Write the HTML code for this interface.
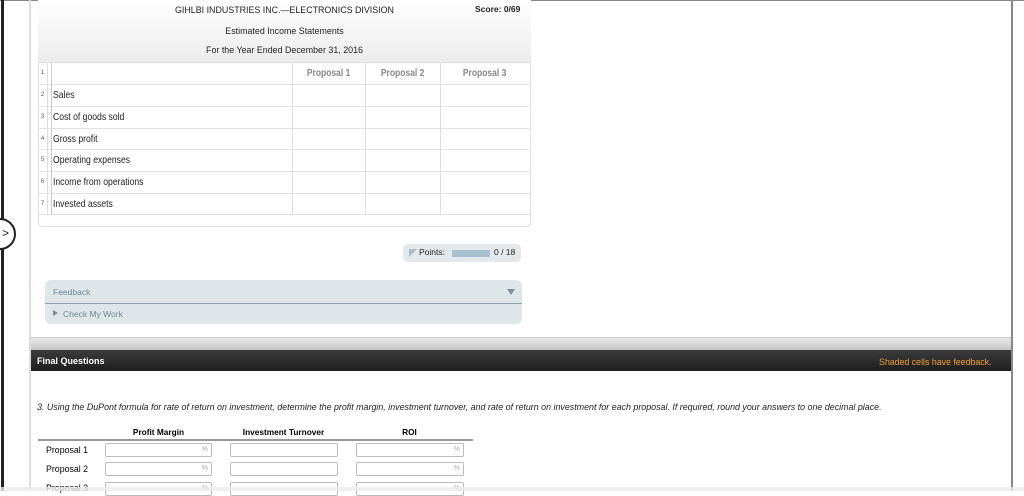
<!DOCTYPE html>
<html><head><style>
*{margin:0;padding:0;box-sizing:border-box}
body{width:1024px;height:491px;overflow:hidden;background:#fff;font-family:"Liberation Sans",sans-serif;position:relative}
.a{position:absolute}
.row{position:absolute;left:38px;width:492px;height:22px;border-top:1px solid #e2e2e2}
.row .n{position:absolute;left:0;width:10px;top:0;height:21px;border-right:1px solid #ddd;font-size:6px;color:#555;text-align:center;line-height:21px}
.row .l{position:absolute;left:15px;top:0;line-height:21px;font-size:10.5px;color:#222;font-family:"Liberation Sans Narrow","Liberation Sans",sans-serif;transform:scaleX(.82);transform-origin:left;white-space:nowrap}
.row .c{position:absolute;top:0;height:21px;border-left:1px solid #ddd}
.ph{position:absolute;text-align:center;line-height:21px;font-size:10px;color:#888;font-weight:bold;font-family:"Liberation Sans Narrow",sans-serif}
.ph span{display:inline-block;transform:scaleX(.85)}
.inp{position:absolute;height:14px;border:1px solid #bbb;border-radius:2px;background:#fff;font-size:7px;color:#aaa;text-align:right;padding-right:3px;line-height:12px}
</style></head><body>
<div class="a" style="left:0;top:0;width:1024px;height:1px;background:#888"></div>
<div class="a" style="left:1px;top:0;width:3px;height:491px;background:#222"></div>
<div class="a" style="left:-16px;top:218px;width:32px;height:32px;border:2px solid #222;border-radius:50%;background:#fff"></div>
<div class="a" style="left:2px;top:226px;font-size:12px;color:#222">&gt;</div>
<div class="a" style="left:29px;top:0;width:2px;height:491px;background:#ddd"></div>
<div class="a" style="left:1011px;top:0;width:2px;height:491px;background:#888"></div>
<div class="a" style="left:38px;top:0;width:493px;height:227px;border:1px solid #e0e0e0;border-top:none;border-radius:0 0 4px 4px"></div>
<div class="a" style="left:38px;top:0;width:493px;height:63px;background:linear-gradient(#fff,#ececec);border-bottom:1px solid #ddd"></div>
<div class="a" style="left:38px;top:5px;width:493px;text-align:center;font-size:8.9px;color:#222">GIHLBI INDUSTRIES INC.—ELECTRONICS DIVISION</div>
<div class="a" style="left:475px;top:4px;font-size:8.5px;font-weight:bold;color:#222">Score: 0/69</div>
<div class="a" style="left:38px;top:26px;width:493px;text-align:center;font-size:8.9px;color:#222">Estimated Income Statements</div>
<div class="a" style="left:38px;top:45px;width:493px;text-align:center;font-size:8.9px;color:#222">For the Year Ended December 31, 2016</div>
<div class="row" style="top:63px;border-top:none"><div class="n">1</div><div class="c" style="left:13px;border-color:#ccc"></div><div class="c" style="left:254px"></div><div class="c" style="left:327px"></div><div class="c" style="left:402px"></div>
<div class="ph" style="left:254px;width:73px"><span>Proposal 1</span></div>
<div class="ph" style="left:327px;width:75px"><span>Proposal 2</span></div>
<div class="ph" style="left:402px;width:90px"><span>Proposal 3</span></div></div>
<div class="row" style="top:84px"><div class="n">2</div><div class="c" style="left:13px;border-color:#ccc"></div><div class="l">Sales</div><div class="c" style="left:254px"></div><div class="c" style="left:327px"></div><div class="c" style="left:402px"></div></div>
<div class="row" style="top:106px"><div class="n">3</div><div class="c" style="left:13px;border-color:#ccc"></div><div class="l">Cost of goods sold</div><div class="c" style="left:254px"></div><div class="c" style="left:327px"></div><div class="c" style="left:402px"></div></div>
<div class="row" style="top:128px"><div class="n">4</div><div class="c" style="left:13px;border-color:#ccc"></div><div class="l">Gross profit</div><div class="c" style="left:254px"></div><div class="c" style="left:327px"></div><div class="c" style="left:402px"></div></div>
<div class="row" style="top:149px"><div class="n">5</div><div class="c" style="left:13px;border-color:#ccc"></div><div class="l">Operating expenses</div><div class="c" style="left:254px"></div><div class="c" style="left:327px"></div><div class="c" style="left:402px"></div></div>
<div class="row" style="top:171px"><div class="n">6</div><div class="c" style="left:13px;border-color:#ccc"></div><div class="l">Income from operations</div><div class="c" style="left:254px"></div><div class="c" style="left:327px"></div><div class="c" style="left:402px"></div></div>
<div class="row" style="top:193px;border-bottom:1px solid #e2e2e2"><div class="n">7</div><div class="c" style="left:13px;border-color:#ccc"></div><div class="l">Invested assets</div><div class="c" style="left:254px"></div><div class="c" style="left:327px"></div><div class="c" style="left:402px"></div></div>
<div class="a" style="left:403px;top:244px;width:118px;height:18px;background:#e3e8ec;border-radius:5px"></div>
<div class="a" style="left:409px;top:249px;width:8px;height:8px;background:#a8bccb;clip-path:polygon(0 0,100% 0,0 100%)"></div>
<div class="a" style="left:419px;top:247px;font-size:8.5px;color:#222">Points:</div>
<div class="a" style="left:452px;top:250px;width:38px;height:7px;background:#a8c0d0"></div>
<div class="a" style="left:494px;top:247px;font-size:8.5px;color:#222">0 / 18</div>
<div class="a" style="left:45px;top:280px;width:477px;height:44px;background:#dfe6ea;border-radius:6px"></div>
<div class="a" style="left:45px;top:303px;width:477px;height:1px;background:#8aa0a8"></div>
<div class="a" style="left:53px;top:287px;font-size:8.5px;color:#6a8a96">Feedback</div>
<div class="a" style="left:507px;top:289px;width:0;height:0;border-left:4px solid transparent;border-right:4px solid transparent;border-top:6px solid #7a9098"></div>
<div class="a" style="left:53px;top:310px;width:0;height:0;border-top:3.5px solid transparent;border-bottom:3.5px solid transparent;border-left:5px solid #7a8a90"></div>
<div class="a" style="left:63px;top:309px;font-size:8.5px;color:#6a8a96">Check My Work</div>
<div class="a" style="left:31px;top:337px;width:980px;height:13px;background:linear-gradient(#e6e6e6,#c6c6c6);border-top:1px solid #d0d0d0"></div>
<div class="a" style="left:31px;top:350px;width:980px;height:21px;background:linear-gradient(#3c3c3c,#1e1e1e)"></div>
<div class="a" style="left:37px;top:356px;font-size:9px;font-weight:bold;color:#fff">Final Questions</div>
<div class="a" style="left:879px;top:357px;font-size:8.8px;color:#f0a030">Shaded cells have feedback.</div>
<div class="a" style="left:37px;top:402px;font-size:8.9px;font-style:italic;color:#222;white-space:nowrap">3. Using the DuPont formula for rate of return on investment, determine the profit margin, investment turnover, and rate of return on investment for each proposal. If required, round your answers to one decimal place.</div>
<div class="a" style="left:105px;top:427px;width:107px;text-align:center;font-size:8.3px;font-weight:bold">Profit Margin</div>
<div class="a" style="left:230px;top:427px;width:107px;text-align:center;font-size:8.3px;font-weight:bold">Investment Turnover</div>
<div class="a" style="left:356px;top:427px;width:107px;text-align:center;font-size:8.3px;font-weight:bold">ROI</div>
<div class="a" style="left:38px;top:439px;width:435px;height:2px;background:#999"></div>
<div class="a" style="left:46px;top:445px;font-size:8.8px">Proposal 1</div>
<div class="a" style="left:46px;top:464px;font-size:8.8px">Proposal 2</div>
<div class="a" style="left:46px;top:483px;font-size:8.8px">Proposal 3</div>
<div class="inp" style="left:105px;top:443px;width:107px">%</div><div class="inp" style="left:230px;top:443px;width:108px"></div><div class="inp" style="left:356px;top:443px;width:108px">%</div>
<div class="inp" style="left:105px;top:462px;width:107px">%</div><div class="inp" style="left:230px;top:462px;width:108px"></div><div class="inp" style="left:356px;top:462px;width:108px">%</div>
<div class="inp" style="left:105px;top:482px;width:107px">%</div><div class="inp" style="left:230px;top:482px;width:108px"></div><div class="inp" style="left:356px;top:482px;width:108px">%</div>
<div class="a" style="left:0;top:487px;width:1024px;height:4px;background:rgba(235,235,235,.8)"></div>
</body></html>
